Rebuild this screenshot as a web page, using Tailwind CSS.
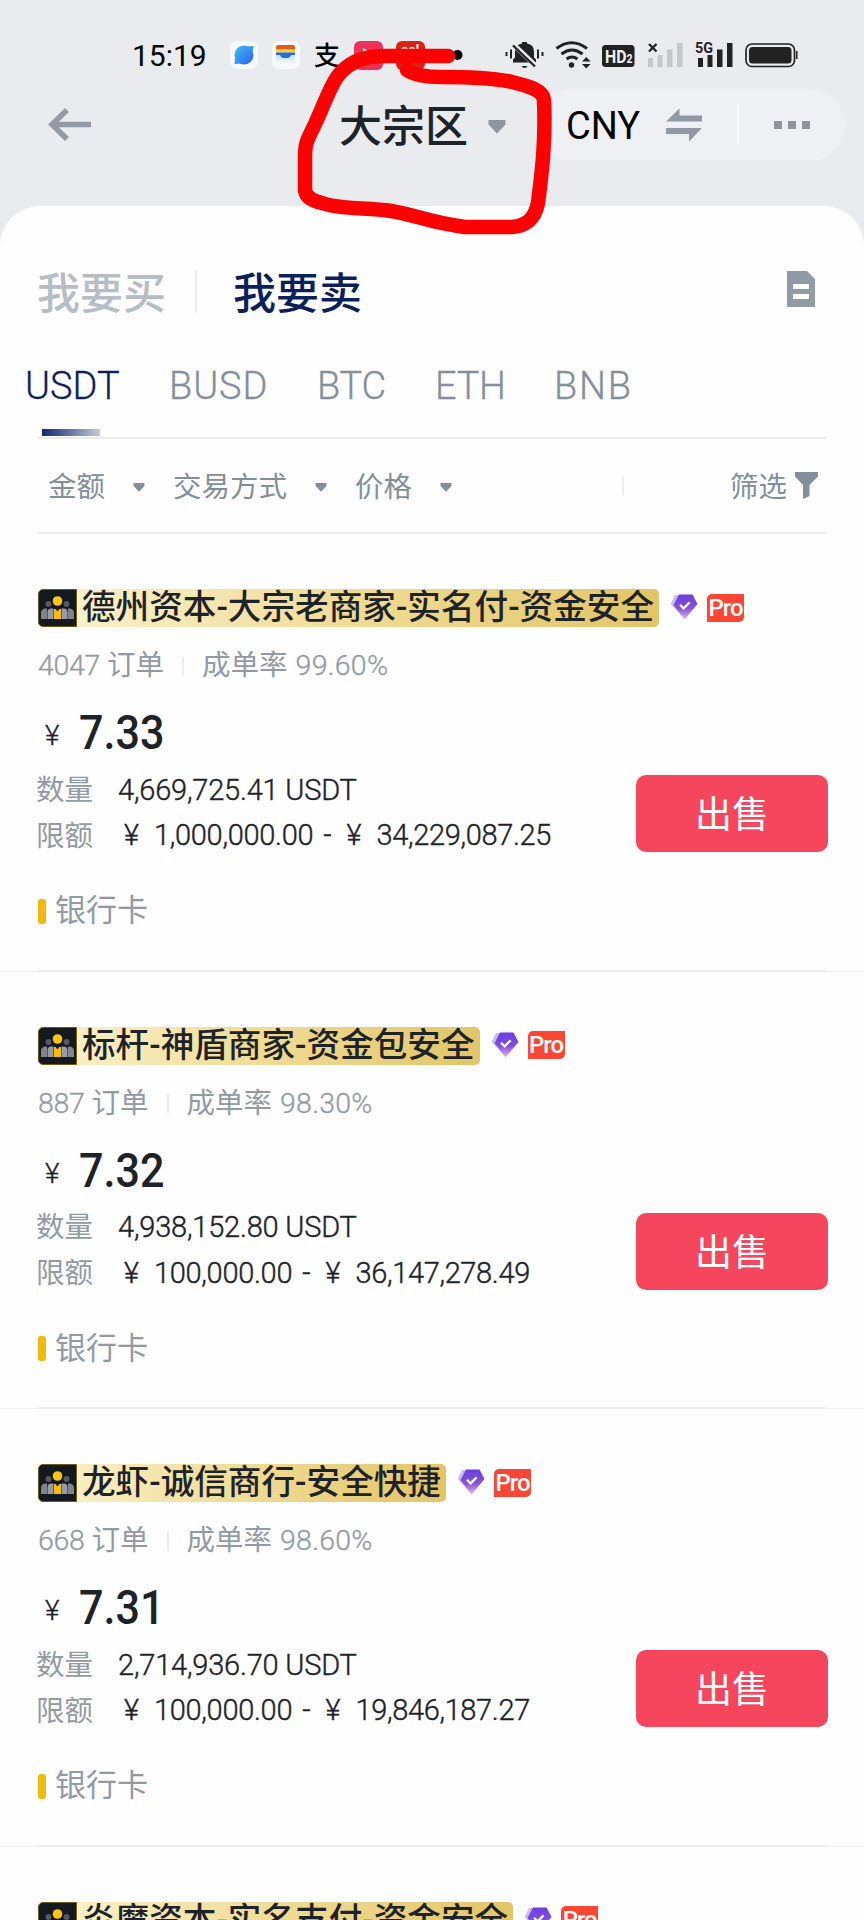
<!DOCTYPE html>
<html lang="zh-CN">
<head>
<meta charset="utf-8">
<title>大宗区</title>
<script src="https://cdn.jsdelivr.net/npm/@tailwindcss/browser@4"></script>
</head>
<body class="w-[864px] h-[1920px] overflow-hidden bg-[#eaebef] relative font-[Roboto,'Noto_Sans_CJK_SC',sans-serif] text-[#1e2329]">

<svg class="absolute w-0 h-0">
  <symbol id="people" viewBox="0 0 39 38">
    <path d="M5 .5H38.500V37.500H5A4.500 4.500 0 0 1 .5 33V5A4.500 4.500 0 0 1 5 .5Z" fill="#14181f" stroke="#6e5c10"/>
    <g fill="#555a63"><circle cx="10.500" cy="15" r="3"/><circle cx="28.500" cy="15" r="3"/></g>
    <g fill="#7f848f"><path d="M3 30v-6q0-4 4-4.500h2V30zM36 30v-6q0-4-4-4.500h-2V30z"/></g>
    <g fill="#969ba6"><path d="M9.500 30v-7q0-3.500 3.500-3.500H15.500V30zM29.500 30v-7q0-3.500-3.500-3.500H23.500V30z"/></g>
    <path d="M16 20h7v10h-7z" fill="#f5bc0c"/><path d="M16 17.500h7l-3.500 5z" fill="#14181f"/>
    <circle cx="19.500" cy="12" r="4.800" fill="#f8c50f"/>
  </symbol>
  <linearGradient id="gem" x1="0" y1="0" x2="0" y2="1"><stop offset="0" stop-color="#6a3fe0"/><stop offset=".55" stop-color="#8350dc"/><stop offset="1" stop-color="#e9b8e6"/></linearGradient>
  <symbol id="diamond" viewBox="0 0 28 26">
    <path d="M5 1h5L4 10l8 12L.5 10z" fill="#c9bdf0"/>
    <path d="M9 .5h13.500L27.500 10 14.500 25.500 3.500 11z" fill="url(#gem)"/>
    <path d="M10 10.800l3.600 3.600 6-6" fill="none" stroke="#fff" stroke-width="2.200"/>
  </symbol>
  <symbol id="caret" viewBox="0 0 18 14"><path d="M.5 0h17v4.500L9 13.500.5 4.500z" fill="currentColor"/></symbol>
</svg>

<!-- Status bar -->
<div class="h-[89px] pt-[37px] flex items-start">
  <div class="ml-[132px] w-[98px] h-[36px] text-[30px] leading-[37px] text-black whitespace-nowrap">15:19</div>
  <svg class="w-[250px] h-[36px] shrink-0" viewBox="230 37 250 36">
    <defs>
      <linearGradient id="pl" x1="0" y1="0" x2="1" y2="1"><stop offset="0" stop-color="#3fc2ee"/><stop offset="1" stop-color="#2d5cf0"/></linearGradient>
      <linearGradient id="wl" x1="0" y1="0" x2="0" y2="1"><stop offset="0" stop-color="#c4dcfb"/><stop offset="1" stop-color="#f8f9fb"/></linearGradient>
    </defs>
    <rect x="230" y="41" width="28" height="28" rx="7" fill="#f8f9fb"/>
    <circle cx="244" cy="55" r="9.500" fill="url(#pl)"/><path d="M234.500 64l.5-6 6 5.500zM253.500 46l-6 .5 5 6z" fill="#2f9df0"/>
    <rect x="272" y="41" width="28" height="28" rx="7" fill="#f8f9fb"/>
    <path d="M276 49v-2q0-2 2-2h15q2 0 2 2v2z" fill="#e85a1c"/><path d="M276 49h19v3.500h-19z" fill="#fbd12c"/>
    <path d="M276 54h19v10h-19z" fill="url(#wl)"/>
    <path d="M276 52.500h19v2.500h-4q-1 3-3 3h-5q-2 0-3-3h-4z" fill="#1f6fe0"/>
    <rect x="354" y="41" width="29" height="29" rx="6" fill="#ee3158"/><path d="M363 48l7 4-7 4z" fill="#fff"/>
    <rect x="396" y="41" width="29" height="29" rx="6" fill="#dd2016"/>
    <text x="401" y="54" font-size="13" font-weight="700" fill="#fff">ool</text>
    <text x="314" y="65" font-size="26" font-weight="500" fill="#000" font-family="Noto Sans CJK SC">支</text>
    <circle cx="457.500" cy="55" r="5" fill="#000"/>
  </svg>
  <svg class="w-[320px] h-[36px] ml-[20px] shrink-0" viewBox="500 37 320 36">
    <path d="M513 62.500v-3l2-2v-6q0-7 7-8v-1.500h5v1.500q7 1 7 8v6l2 2v3zM521.500 66h6q-1 2-3 2t-3-2z" fill="#222"/>
    <path d="M513 44l24 23" stroke="#eaebef" stroke-width="5"/><path d="M513 45.500l22 21" stroke="#222" stroke-width="2.300"/>
    <path d="M505.500 52h2v4h-2zM510 49.500h2v9h-2zM537 49.500h2v9h-2zM541.500 52h2v4h-2z" fill="#222"/>
    <g fill="none" stroke="#222" stroke-width="3"><path d="M556.500 48.500q15-11.500 30.500 0"/><path d="M561.500 54q10.500-8 21 0"/><path d="M566.500 59q5.500-4 11 0"/></g>
    <circle cx="571.500" cy="65" r="2.700" fill="#222"/><path d="M582 61.500l4.300-4.500 4.300 4.500zM582 64l4.300 4.500 4.300-4.500z" fill="#222"/>
    <rect x="602" y="45" width="32.500" height="22" rx="3.500" fill="#222"/>
    <text x="605" y="62.500" font-size="18" font-weight="700" fill="#f2f3f5" textLength="27.500" lengthAdjust="spacingAndGlyphs">HD<tspan font-size="12">2</tspan></text>
    <g fill="#c6c7cb"><rect x="648" y="58" width="5" height="9"/><rect x="657.500" y="55" width="5" height="12"/><rect x="667" y="49.500" width="5.500" height="17.500"/><rect x="677" y="43" width="5.500" height="24"/></g>
    <path d="M649 44l7.500 7.500m0-7.500L649 51.500" stroke="#222" stroke-width="2.300"/>
    <text x="695" y="53" font-size="15.500" font-weight="700" fill="#222" textLength="18" lengthAdjust="spacingAndGlyphs">5G</text>
    <g fill="#222"><rect x="698" y="58" width="5" height="9"/><rect x="707.500" y="55" width="5" height="12"/><rect x="717" y="49.500" width="5.500" height="17.500"/><rect x="727" y="43" width="5.500" height="24"/></g>
    <rect x="746" y="44" width="48.500" height="22.500" rx="6" fill="none" stroke="#222" stroke-width="1.700"/><rect x="749" y="47" width="42.500" height="16.500" rx="3.500" fill="#222"/><path d="M796 51h1.500v8H796z" fill="#222"/>
  </svg>
</div>

<!-- Title bar -->
<header class="h-[117px] flex items-start">
  <svg class="ml-[48px] mt-[19px] w-[44px] h-[34px]" viewBox="0 0 44 34"><path d="M43 16.500H5M19 2L4 16.500 19 31" fill="none" stroke="#929aa5" stroke-width="5.500"/></svg>
  <h1 class="ml-[247px] mr-[1px] pt-px text-[43px] leading-[74px] font-medium whitespace-nowrap w-[129px]">大宗区</h1>
  <svg class="ml-[19px] mt-[31px] w-[18px] h-[14px] text-[#8f959e]"><use href="#caret"/></svg>
  <div class="ml-[29px] w-[310px] h-[72px] rounded-full bg-[#eff0f3] flex items-center text-black">
    <span class="ml-[31px] w-[72px] text-[38px] leading-[72px] pt-[2px]">CNY</span>
    <svg class="ml-[28px] w-[36px] h-[34px]" viewBox="0 0 36 34"><path d="M0 13.500L13.500.5v7H36v6zM36 20L23 33.500V26H0v-6z" fill="#9299a4"/></svg>
    <div class="ml-[35px] w-[2px] h-[42px] bg-[#fbfbfc]"></div>
    <div class="ml-[35px] flex gap-[6px]"><i class="size-[8px] bg-[#8f959e]"></i><i class="size-[8px] bg-[#8f959e]"></i><i class="size-[8px] bg-[#8f959e]"></i></div>
  </div>
</header>

<!-- Content sheet -->
<main class="h-[1714px] bg-[#fefefe] rounded-t-[40px] overflow-hidden">
  <div class="h-[130px] pt-[64px] pl-[37px] pr-[49px] flex text-[43px] leading-[49px] font-medium">
    <span class="w-[158px] text-[#b7bdc6]">我要买</span>
    <i class="w-[2px] h-[43px] bg-[#ebecee]"></i>
    <span class="ml-[36px] text-[#0b1f5c]">我要卖</span>
    <svg class="ml-auto mt-[1px] w-[28px] h-[36px]" viewBox="0 0 28 36"><path fill-rule="evenodd" d="M0 0h20l8 8v28H0zM6 13v5h16v-5zM6 23v5h16v-5z" fill="#929aa5"/></svg>
  </div>
  <nav class="h-[101px] pt-[26px] pl-[25px] relative flex text-[38px] leading-[49px] font-light [-webkit-text-stroke:.3px] text-[#848e9c]">
    <span class="w-[144px] text-[#0b1f5c]">USDT</span><span class="w-[148px] tracking-[.9px]">BUSD</span><span class="w-[118px] tracking-[-.3px]">BTC</span><span class="w-[119px] tracking-[-.3px]">ETH</span><span class="tracking-[1.700px]">BNB</span>
    <i class="absolute left-[42px] top-[93px] w-[58px] h-[7px] bg-linear-to-r from-[#11296a] to-[#c9ccd8]"></i>
  </nav>
  <div class="mx-[38px] h-[97px] border-y-[2px] border-[#eaebec] flex items-center text-[28.500px] text-[#848e9c] pl-[10px] pr-[8px]">
    <span class="pt-[5px]">金额</span><svg class="ml-[28px] mr-[28px] mt-[3px] w-[12px] h-[9px]"><use href="#caret"/></svg>
    <span class="pt-[5px]">交易方式</span><svg class="ml-[28px] mr-[28px] mt-[3px] w-[12px] h-[9px]"><use href="#caret"/></svg>
    <span class="pt-[5px]">价格</span><svg class="ml-[28px] mt-[3px] w-[12px] h-[9px]"><use href="#caret"/></svg>
    <i class="ml-[170px] w-[2px] h-[19px] bg-[#eceded]"></i>
    <span class="ml-auto mr-[8px] pt-[5px]">筛选</span>
    <svg class="w-[23px] h-[27px]" viewBox="0 0 23 27"><path d="M0 0h23v4.500L14.500 13v11L8 27V13L0 4.500z" fill="#848e9c"/></svg>
  </div>
  <div id="list"></div>
</main>

<template id="row">
  <section class="h-[437.500px] pt-[55px] relative">
    <div class="ml-[38px] h-[38px] flex items-center whitespace-nowrap">
      <div class="h-[38px] flex items-center rounded-[5px] pr-[5px] bg-linear-to-r from-[#fbf3cf] via-[#f0dc96] to-[#e2c566]">
        <svg class="w-[39px] h-[38px] shrink-0"><use href="#people"/></svg>
        <span data-k="name" class="ml-[5px] text-[33.600px] leading-[38px] font-medium tracking-[.03px]"></span>
      </div>
      <svg class="ml-[11px] mb-[2px] w-[28px] h-[26px]"><use href="#diamond"/></svg>
      <span class="ml-[9px] mb-px w-[37px] h-[28px] rounded-tl-[5px] rounded-br-[5px] bg-[#fb4634] text-white text-[24px] leading-[29px] font-medium text-center tracking-[-1px]">Pro</span>
    </div>
    <div class="ml-[38px] mt-[20px] h-[38px] flex items-center text-[28.500px] leading-[38px] text-[#929aa5] whitespace-nowrap">
      <span data-k="orders" class="font-light [-webkit-text-stroke:.3px] tracking-[-.3px]"></span><span class="ml-[7px]">订单</span><i class="mx-[18px] w-[2px] h-[19px] bg-[#eaebed]"></i><span>成单率</span><span data-k="rate" class="ml-[8px] font-light [-webkit-text-stroke:.3px] tracking-[.25px]"></span>
    </div>
    <div class="ml-[45px] mt-[20px] h-[56px] flex items-baseline leading-[56px]">
      <span class="w-[34px] text-[28px] font-light [-webkit-text-stroke:.3px] relative -top-[4px]">¥</span><span data-k="price" class="text-[49px] font-medium origin-left scale-x-[.88]"></span>
    </div>
    <div class="ml-[36px] mt-[7px] flex h-[46px] items-center text-[28.500px] whitespace-nowrap"><span class="w-[82px] text-[#929aa5]">数量</span><span data-k="amt" class="text-[29px] font-light [-webkit-text-stroke:.4px] tracking-[-.2px] pb-px"></span></div>
    <div class="ml-[36px] flex h-[46px] items-center text-[28.500px] whitespace-nowrap"><span class="w-[88px] text-[#929aa5]">限额</span><div class="flex pb-[2px] text-[29px] font-light [-webkit-text-stroke:.4px]"><span class="w-[30px]">¥</span><span data-k="lo" class="tracking-[-.3px]"></span><span class="ml-[10px] mr-[15px]">-</span><span class="w-[30px]">¥</span><span data-k="hi" class="tracking-[-.35px]"></span></div></div>
    <div class="ml-[38px] mt-[28px] h-[46px] flex items-center text-[31px] text-[#929aa5]"><i class="w-[8px] h-[25px] rounded-[3px] bg-[#f0b90b] mr-[9px]"></i><span class="pt-px">银行卡</span></div>
    <button class="absolute left-[636px] top-[241px] w-[192px] h-[77px] rounded-[10px] bg-[#f6465d] text-white text-[37px] pt-[5px]">出售</button>
    <i class="absolute inset-x-0 bottom-0 h-px bg-[#f1f1f2]"></i><i class="absolute left-[38px] right-[38px] bottom-0 h-[2px] bg-[#eaebec]"></i>
  </section>
</template>

<svg class="absolute left-0 top-0 w-[864px] h-[240px] pointer-events-none" viewBox="0 0 864 240">
  <path d="M448 56H384C362 56 347 63 337 77C329 89 323 107 315 124C307 141 305 142 305 158V190C306 198 313 201 322 203C341 210 369 207 391 211C412 214 431 223 465 227H511C531 226 536 213 538 203C541 178 546 145 544 100C543 90 529 86 512 82C494 78 465 77 441 77C425 77 413 74 407 70" fill="none" stroke="#f00" stroke-width="14.500" stroke-linecap="round" stroke-linejoin="round"/>
</svg>

<script>
const rows = [
  {name:'德州资本-大宗老商家-实名付-资金安全',orders:'4047',rate:'99.60%',price:'7.33',amt:'4,669,725.41 USDT',lo:'1,000,000.00',hi:'34,229,087.25'},
  {name:'标杆-神盾商家-资金包安全',orders:'887',rate:'98.30%',price:'7.32',amt:'4,938,152.80 USDT',lo:'100,000.00',hi:'36,147,278.49'},
  {name:'龙虾-诚信商行-安全快捷',orders:'668',rate:'98.60%',price:'7.31',amt:'2,714,936.70 USDT',lo:'100,000.00',hi:'19,846,187.27'},
  {name:'炎魔资本-实名支付-资金安全'}
];
for (const r of rows) {
  const n = document.getElementById('row').content.cloneNode(true);
  if (!r.price) {
    const s = n.querySelector('section');
    while (s.children.length > 1) s.lastElementChild.remove();
  }
  n.querySelectorAll('[data-k]').forEach(e => e.textContent = r[e.dataset.k] || '');
  document.getElementById('list').append(n);
}
</script>
</body>
</html>
